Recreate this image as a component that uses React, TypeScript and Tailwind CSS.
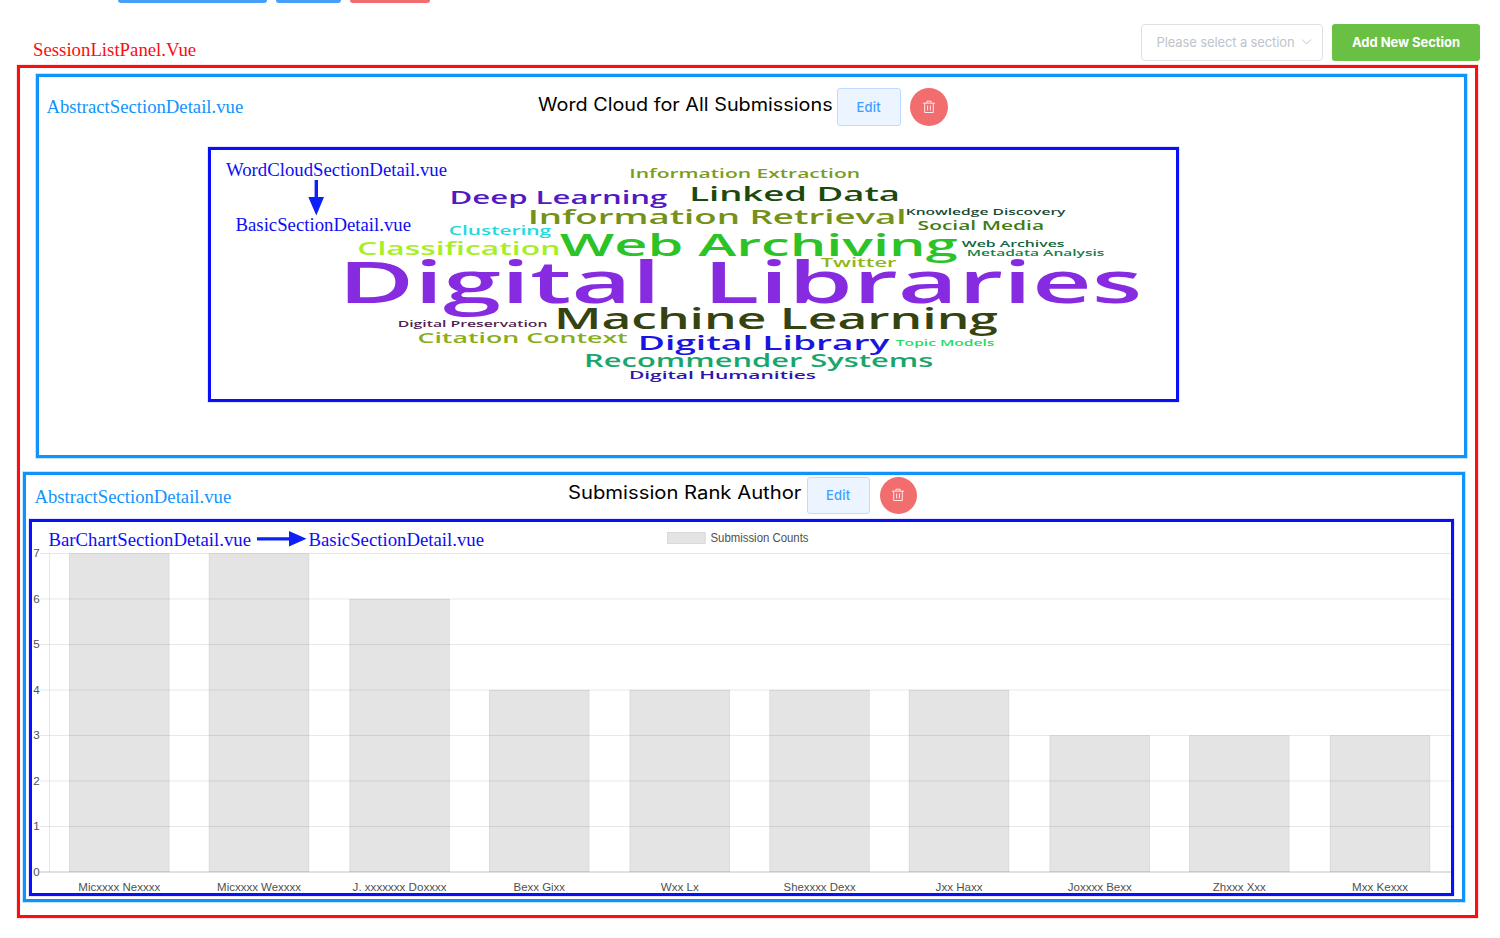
import React from "react";

type Word = {
  text: string;
  x: number;
  width: number;
  baseline: number;
  cap: number;
  color: string;
};

const words: Word[] = [
  { text: "Information Extraction", x: 631, width: 228.5, baseline: 178, cap: 8.6, color: "#7a9e1c" },
  { text: "Linked Data", x: 692, width: 207, baseline: 200.7, cap: 14.4, color: "#1c4a0c" },
  { text: "Deep Learning", x: 452, width: 214.5, baseline: 203.5, cap: 12.6, color: "#5118c4" },
  { text: "Information Retrieval", x: 530.5, width: 375, baseline: 223.8, cap: 14.4, color: "#74911a" },
  { text: "Knowledge Discovery", x: 907, width: 158, baseline: 214.5, cap: 6.6, color: "#174a34" },
  { text: "Social Media", x: 918.5, width: 125, baseline: 229.7, cap: 8.8, color: "#3f7d10" },
  { text: "Clustering", x: 449.5, width: 101, baseline: 234.5, cap: 8.6, color: "#1edbe0" },
  { text: "Classification", x: 358.5, width: 201, baseline: 255.4, cap: 12.4, color: "#a6ef24" },
  { text: "Web Archiving", x: 560.5, width: 395.5, baseline: 255.6, cap: 22, color: "#2bc327" },
  { text: "Web Archives", x: 962, width: 102, baseline: 247.2, cap: 6.5, color: "#12643c" },
  { text: "Metadata Analysis", x: 968, width: 136, baseline: 256.4, cap: 6.4, color: "#148048" },
  { text: "Digital", x: 346, width: 312, baseline: 302.5, cap: 41, color: "#862be0" },
  { text: "Libraries", x: 711, width: 428.5, baseline: 302.5, cap: 41, color: "#862be0" },
  { text: "Twitter", x: 821, width: 75, baseline: 266.8, cap: 8.4, color: "#8fb619" },
  { text: "Digital Preservation", x: 399, width: 148, baseline: 327, cap: 6.8, color: "#52214f" },
  { text: "Machine Learning", x: 558, width: 438.5, baseline: 329, cap: 20.5, color: "#34430f" },
  { text: "Citation Context", x: 418.5, width: 208.5, baseline: 343, cap: 10.4, color: "#8aae1b" },
  { text: "Digital Library", x: 640.5, width: 248, baseline: 350.3, cap: 14.3, color: "#1914e2" },
  { text: "Topic Models", x: 896, width: 98, baseline: 345.5, cap: 6.6, color: "#1fdc62" },
  { text: "Recommender Systems", x: 586.5, width: 346, baseline: 367.3, cap: 12.2, color: "#18a66b" },
  { text: "Digital Humanities", x: 630.5, width: 185, baseline: 379.4, cap: 8.2, color: "#2c16ad" },
];

const bars = [
  { name: "Micxxxx Nexxxx", x: 69, value: 7, w: 82 },
  { name: "Micxxxx Wexxxx", x: 208.8, value: 7, w: 84 },
  { name: "J. xxxxxxx Doxxxx", x: 349.3, value: 6, w: 94 },
  { name: "Bexx Gixx", x: 489, value: 4, w: 51.5 },
  { name: "Wxx Lx", x: 629.5, value: 4, w: 38 },
  { name: "Shexxxx Dexx", x: 769.3, value: 4, w: 72 },
  { name: "Jxx Haxx", x: 908.8, value: 4, w: 47 },
  { name: "Joxxxx Bexx", x: 1049.5, value: 3, w: 64 },
  { name: "Zhxxx Xxx", x: 1189, value: 3, w: 53 },
  { name: "Mxx Kexxx", x: 1329.8, value: 3, w: 56 },
];

const rowY = (value: number) => 872 - value * 45.5;

function leadingGap(word: Word): number {
  const size = word.cap / 0.714;
  if ("DLIRKM".includes(word.text[0])) return size * 0.14;
  if ("CS".includes(word.text[0])) return size * 0.07;
  return size * 0.02;
}

function TrashIcon() {
  return (
    <svg width="14" height="14" viewBox="0 0 14 14" fill="none" stroke="#fff" strokeOpacity="0.9" strokeWidth="0.95">
      <path d="M1 3.2h12M4.9 3V1.2h4.2V3M2.7 3.4v9.1h8.6V3.4M5.6 5.4v5M8.4 5.4v5" />
    </svg>
  );
}

function Actions() {
  return (
    <>
      <button className="h-[37.5px] w-[63.5px] shrink-0 rounded-[3px] border border-[#bddcff] bg-[#ecf5ff] pt-px font-['Inter',sans-serif] text-[13px] font-medium leading-none tracking-[0.2px] text-[#409eff]">
        Edit
      </button>
      <button aria-label="Delete" className="ml-[9.5px] flex size-[37.5px] shrink-0 items-center justify-center rounded-full bg-[#f26d6e]">
        <TrashIcon />
      </button>
    </>
  );
}

function WordCloud() {
  return (
    <svg className="block" width="965" height="249" viewBox="211 150 965 249">
      <g fontFamily="'Open Sans', sans-serif" fontWeight="600">
        {words.map((word) => {
          const gap = leadingGap(word);
          return (
            <text
              key={word.text}
              x={word.x - gap}
              y={word.baseline}
              fontSize={word.cap / 0.714}
              fill={word.color}
              textLength={word.width + gap + (word.cap / 0.714) * 0.05}
              lengthAdjust="spacingAndGlyphs"
            >
              {word.text}
            </text>
          );
        })}
      </g>
      <g fontFamily="'Liberation Serif', serif" fontSize="18.5" fill="#0d0df5">
        <text x="226" y="175.5" textLength="221" lengthAdjust="spacingAndGlyphs">WordCloudSectionDetail.vue</text>
        <text x="235.5" y="230.5" textLength="175.5" lengthAdjust="spacingAndGlyphs">BasicSectionDetail.vue</text>
      </g>
      <path d="M314.6 180h3.4v17h6L316.3 215.5 308.3 197h6.3z" fill="#0d20fa" />
    </svg>
  );
}

function BarChart() {
  return (
    <svg className="block" width="1419" height="371" viewBox="32 522 1419 371">
      {[7, 6, 5, 4, 3, 2, 1].map((v) => (
        <path key={v} d={`M40 ${rowY(v)}H1451`} stroke="#000" strokeOpacity="0.09" />
      ))}
      <path d="M49.5 553.5V872" stroke="#000" strokeOpacity="0.09" />
      <path d="M40 872H1451" stroke="#000" strokeOpacity="0.24" />
      {bars.map((bar) => (
        <g key={bar.name}>
          <rect x={bar.x} y={rowY(bar.value)} width="100.4" height={rowY(0) - rowY(bar.value)} fill="#000" fillOpacity="0.105" />
          <path
            d={`M${bar.x + 0.5} ${rowY(0)}V${rowY(bar.value)}H${bar.x + 100}V${rowY(0)}`}
            fill="none"
            stroke="#000"
            strokeOpacity="0.04"
          />
        </g>
      ))}
      <rect x="667" y="532" width="38.5" height="12" fill="#e4e4e4" />
      <rect x="667.5" y="532.5" width="37.5" height="11" fill="none" stroke="#dadada" />
      <g fontFamily="'Liberation Sans', sans-serif" fontSize="11.6" fill="#505050">
        <text x="710.5" y="542" fontSize="12" textLength="98" lengthAdjust="spacingAndGlyphs">Submission Counts</text>
        {[0, 1, 2, 3, 4, 5, 6, 7].map((v) => (
          <text key={v} x="33.3" y={rowY(v) + 3.6}>{v}</text>
        ))}
        {bars.map((bar) => (
          <text key={bar.name} x={bar.x + 50.3} y="891" textAnchor="middle" textLength={bar.w} lengthAdjust="spacingAndGlyphs">
            {bar.name}
          </text>
        ))}
      </g>
      <g fontFamily="'Liberation Serif', serif" fontSize="18.5" fill="#0d0df5">
        <text x="48.5" y="545.5" textLength="202.5" lengthAdjust="spacingAndGlyphs">BarChartSectionDetail.vue</text>
        <text x="308.5" y="545.5" textLength="175.5" lengthAdjust="spacingAndGlyphs">BasicSectionDetail.vue</text>
      </g>
      <path d="M257 537.2h32V531L306.5 538.8 289 546.5v-6.1h-32z" fill="#0d20fa" />
    </svg>
  );
}

export default function App() {
  return (
    <div className="h-[938px] w-[1500px] overflow-hidden bg-white">
      <div className="flex h-[65px] items-start">
        <div className="flex w-[1141px] shrink-0 flex-col">
          <div className="flex h-[3px] pl-[118px]">
            <div className="h-[3px] w-[149px] rounded-b-[3px] bg-[#479ffa]" />
            <div className="ml-[9px] h-[3px] w-[65px] rounded-b-[3px] bg-[#479ffa]" />
            <div className="ml-[9px] h-[3px] w-[80px] rounded-b-[3px] bg-[#f26d6e]" />
          </div>
          <div className="mt-[36px] pl-[33px] font-['Liberation_Serif',serif] text-[18.8px] leading-[22px] text-[#fb0d0d]">
            SessionListPanel.Vue
          </div>
        </div>
        <div className="mt-[23.5px] flex h-[37.5px] w-[182px] shrink-0 items-center rounded-[4px] border border-[#dfe1e8] pl-[14.5px] font-['Inter',sans-serif] text-[13px] tracking-[-0.12px] text-[#bfc3cb]">
          <span className="w-[139px] whitespace-nowrap">Please select a section</span>
          <svg className="ml-[5.5px]" width="11" height="8" viewBox="0 0 11 8" fill="none" stroke="#c0c4cc">
            <path d="M1 1.5l4.5 4.5L10 1.5" />
          </svg>
        </div>
        <button className="ml-[9px] mt-[23.5px] h-[37.5px] w-[148px] shrink-0 whitespace-nowrap rounded-[3px] bg-[#69c043] font-['Inter',sans-serif] text-[13px] font-bold tracking-[-0.04px] text-white">
          Add New Section
        </button>
      </div>

      <main className="ml-[17px] h-[853px] w-[1461px] border-[3px] border-[#fb0d12] pt-[6px] shadow-[0_0_0_1px_rgba(251,13,18,0.12)]">
        <section className="ml-[16px] h-[384px] w-[1431px] border-[3px] border-[#1193fc] pt-[11px] shadow-[0_0_0_1px_rgba(17,147,252,0.25)]">
          <div className="flex h-[37.5px] items-center">
            <span className="w-[499px] shrink-0 pl-[7.5px] font-['Liberation_Serif',serif] text-[18.7px] leading-[22px] text-[#1193fc]">
              AbstractSectionDetail.vue
            </span>
            <h2 className="w-[299px] shrink-0 origin-left scale-x-110 whitespace-nowrap pb-[4px] font-['Inter',sans-serif] text-[18px] leading-[24px] text-black">
              Word Cloud for All Submissions
            </h2>
            <Actions />
          </div>
          <div className="ml-[169px] mt-[21.5px] h-[255px] w-[971px] border-[3px] border-[#0a10f5] shadow-[0_0_0_1px_rgba(10,16,245,0.1)]">
            <WordCloud />
          </div>
        </section>

        <section className="ml-[3px] mt-[14px] h-[430px] w-[1442px] border-[3px] border-[#1193fc] pt-[1.5px] shadow-[0_0_0_1px_rgba(17,147,252,0.25)]">
          <div className="flex h-[37.5px] items-center">
            <span className="w-[541.5px] shrink-0 pl-[8.5px] pt-[4px] font-['Liberation_Serif',serif] text-[18.7px] leading-[22px] text-[#1193fc]">
              AbstractSectionDetail.vue
            </span>
            <h2 className="w-[239px] shrink-0 origin-left scale-x-[1.125] whitespace-nowrap pb-[4px] font-['Inter',sans-serif] text-[18px] leading-[24px] text-black">
              Submission Rank Author
            </h2>
            <Actions />
          </div>
          <div className="ml-[3px] mt-[5px] h-[377px] w-[1425px] border-[3px] border-[#0a10f5] shadow-[0_0_0_1px_rgba(10,16,245,0.1)]">
            <BarChart />
          </div>
        </section>
      </main>
    </div>
  );
}
